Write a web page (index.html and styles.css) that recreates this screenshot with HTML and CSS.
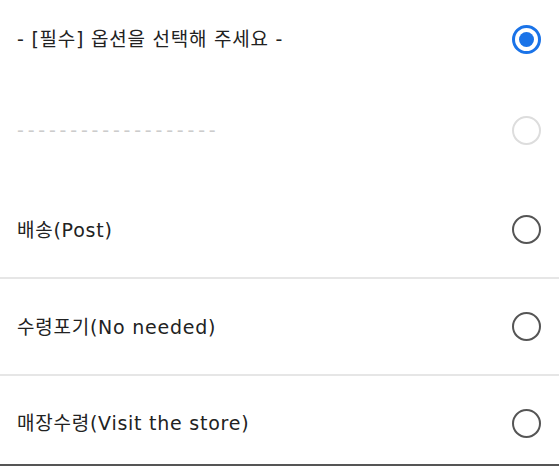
FILE: index.html
```html
<!DOCTYPE html>
<html lang="ko">
<head>
<meta charset="utf-8">
<link rel="stylesheet" href="styles.css">
</head>
<body>
<ul class="options">
  <li class="opt opt-first">
    <span class="label">- [필수] 옵션을 선택해 주세요 -</span>
    <span class="radio radio-checked"></span>
  </li>
  <li class="opt opt-second">
    <span class="label label-disabled">-------------------</span>
    <span class="radio radio-disabled"></span>
  </li>
  <li class="opt opt-third divided">
    <span class="label">배송(Post)</span>
    <span class="radio"></span>
  </li>
  <li class="opt opt-fourth divided">
    <span class="label">수령포기(No needed)</span>
    <span class="radio"></span>
  </li>
  <li class="opt opt-last">
    <span class="label">매장수령(Visit the store)</span>
    <span class="radio"></span>
  </li>
</ul>
</body>
</html>
```
FILE: styles.css
```css
html, body {
  margin: 0;
  padding: 0;
  background: #ffffff;
  overflow: hidden;
}
body {
  font-family: "DejaVu Sans", "Noto Sans CJK KR", sans-serif;
  color: #222222;
}
.options {
  list-style: none;
  margin: 0;
  padding: 0;
}
.opt {
  display: flex;
  align-items: center;
  justify-content: space-between;
  padding: 0 18px 0 17px;
  box-sizing: border-box;
}
.opt-first { height: 78px; }
.opt-second { height: 104px; }
.opt-third { height: 97px; }
.opt-fourth { height: 97px; }
.opt-last {
  height: 90px;
  padding-top: 6px;
  border-bottom: 2px solid #555555;
}
.divided { border-bottom: 2px solid #e6e6e6; }
.label {
  font-size: 19px;
  line-height: 28px;
  letter-spacing: 0.75px;
  white-space: nowrap;
}
.label-disabled {
  color: #cccccc;
  letter-spacing: 3.8px;
}
.radio {
  width: 29px;
  height: 29px;
  box-sizing: border-box;
  border-radius: 50%;
  border: 2.5px solid #555555;
  display: flex;
  align-items: center;
  justify-content: center;
  flex: none;
}
.radio-disabled { border-color: #dddddd; }
.radio-checked { border: 3px solid #1a73e8; }
.radio-checked::after {
  content: "";
  width: 15px;
  height: 15px;
  border-radius: 50%;
  background: #1a73e8;
}
```
